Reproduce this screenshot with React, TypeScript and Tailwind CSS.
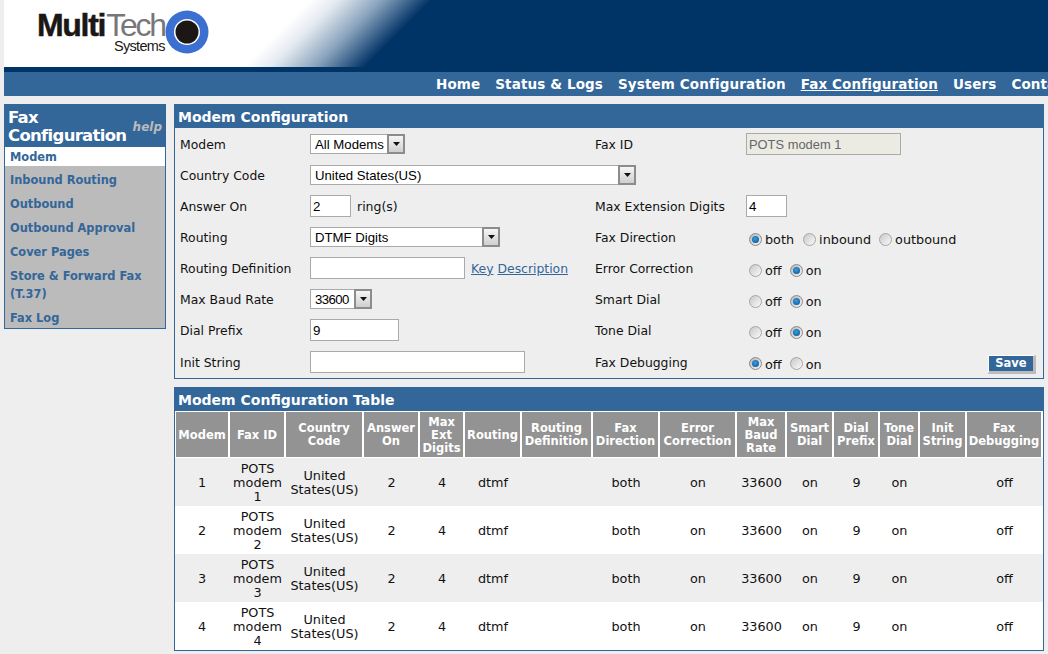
import React from "react";

const V = "font-['DejaVu_Sans',Verdana,sans-serif]";
const A = "font-['Liberation_Sans',Arial,sans-serif]";

function Arrow() {
  return (
    <span className="flex h-[20px] w-[18px] shrink-0 items-center justify-center border-2 border-[#8c8c8c] bg-[linear-gradient(#f6f6f6,#cfcfcf)]">
      <svg width="7" height="4" viewBox="0 0 7 4"><path d="M0 0h7L3.5 4z" fill="#111" /></svg>
    </span>
  );
}

function Select({ value, width, extra = "" }: { value: string; width: string; extra?: string }) {
  return (
    <div className={`-mt-[1px] flex h-[20px] items-center border-y border-l border-[#aaa] bg-white pl-[4px] ${width}`}>
      <select
        defaultValue={value}
        className={`${A} h-full min-w-0 flex-1 appearance-none bg-transparent text-[13.2px] text-black outline-none ${extra}`}
      >
        <option>{value}</option>
      </select>
      <Arrow />
    </div>
  );
}

function Input({ value = "", width, disabled }: { value?: string; width: string; disabled?: boolean }) {
  return (
    <input
      readOnly
      defaultValue={value}
      className={`${A} -mt-[1px] h-[22px] border border-[#aaa] px-[2px] outline-none ${width} ${
        disabled ? "bg-[#ebebe4] text-[12.9px] text-[#666]" : "bg-white text-[13.33px] text-black"
      }`}
    />
  );
}

function Radio({ on }: { on?: boolean }) {
  return (
    <span
      className={`-mt-[1px] flex h-[13px] w-[13px] shrink-0 items-center justify-center rounded-full border ${
        on ? "border-[#8a8a8a] bg-[linear-gradient(135deg,#b5b5b5,#f5f5f5)]" : "border-[#a5a5a5] bg-[linear-gradient(135deg,#c8c8c8,#fafafa)]"
      }`}
    >
      {on && <span className="h-[7px] w-[7px] rounded-full bg-[radial-gradient(circle_at_45%_40%,#35a0e8,#0a4a80)]" />}
    </span>
  );
}

function Radios({ items }: { items: [string, boolean, string][] }) {
  return (
    <div className="mt-[4px] flex items-center pl-[3px]">
      {items.map(([label, on, mr]) => (
        <span key={label} className={`flex items-center ${mr}`}>
          <Radio on={on} />
          <span className="ml-[3px] text-[12.8px] leading-[15px]">{label}</span>
        </span>
      ))}
    </div>
  );
}

const offOn = (on: boolean): [string, boolean, string][] => [
  ["off", !on, "mr-[8px]"],
  ["on", on, ""],
];

const Label = ({ children }: { children: React.ReactNode }) => (
  <div className="mt-[2px] text-[12.4px] leading-none text-[#111]">{children}</div>
);

const cols = [55, 56, 78, 56, 45, 57, 71, 67, 77, 50, 47, 46, 40, 47, 76];
const heads = [
  ["Modem"], ["Fax ID"], ["Country", "Code"], ["Answer", "On"], ["Max", "Ext", "Digits"], ["Routing"],
  ["Routing", "Definition"], ["Fax", "Direction"], ["Error", "Correction"], ["Max", "Baud", "Rate"],
  ["Smart", "Dial"], ["Dial", "Prefix"], ["Tone", "Dial"], ["Init", "String"], ["Fax", "Debugging"],
];
const navItems = ["Home", "Status & Logs", "System Configuration", "Fax Configuration", "Users", "Contact"];
const sideItems = ["Inbound Routing", "Outbound", "Outbound Approval", "Cover Pages"];

export default function App() {
  return (
    <div className={`${V} h-[654px] w-[1048px] overflow-hidden bg-[#eeeeee] pl-[4px] text-[#111]`}>
      <header className="relative h-[67px] bg-[linear-gradient(135deg,#ffffff_27.5%,#e6ebf1_30%,#8aa3bd_34%,#003366_38.5%)]">
        <div className={`${A} absolute left-[33px] top-[9px] flex items-start leading-none`}>
          <span className="text-[32px] font-bold tracking-[-1.3px] text-[#1a1714] [-webkit-text-stroke:0.5px_#1a1714]">Multi</span>
          <span className="ml-[1px] text-[32px] tracking-[-2.2px] text-[#77777a]">Tech</span>
        </div>
        <div className={`${A} absolute left-[110px] top-[39px] text-[14.5px] leading-none tracking-[-0.7px] text-[#1a1714]`}>Systems</div>
        <svg className="absolute left-[161px] top-[10px]" width="44" height="44" viewBox="0 0 44 44">
          <circle cx="22" cy="22" r="21.5" fill="#3b6fd1" />
          <circle cx="22" cy="22" r="13" fill="#fff" />
          <circle cx="22" cy="22" r="11.5" fill="#1a1714" />
        </svg>
      </header>
      <div className="h-[5px] bg-[#003366]" />
      <nav className="flex h-[24px] items-center gap-[15px] overflow-hidden whitespace-nowrap bg-[#336699] pl-[432px] text-[13.5px] font-bold tracking-[0.12px] text-white">
        {navItems.map((n) => (
          <a key={n} className={n === "Fax Configuration" ? "underline" : ""}>{n}</a>
        ))}
      </nav>

      <div className="mt-[8px] flex items-start gap-[8px]">
        <aside className="w-[162px] border border-t-0 border-[#336699] bg-[#bbbbbb]">
          <div className="relative h-[43px] bg-[#336699] pl-[3px] pt-[5px] text-[16.5px] font-bold leading-[17.5px] tracking-[-0.7px] text-white">
            Fax<br />Configuration
            <span className="absolute right-[3px] top-[15px] text-[12px] italic tracking-normal text-[#bbbbbb]">help</span>
          </div>
          <div className="h-[19px] bg-white pl-[5px] text-[11.4px] font-bold leading-[21px] text-[#336699]">Modem</div>
          <ul className="pt-[2px] text-[11.4px] font-bold leading-[18px] text-[#336699]">
            {sideItems.map((s) => (
              <li key={s} className="py-[3px] pl-[5px]">{s}</li>
            ))}
            <li className="py-[3px] pl-[5px]">Store &amp; Forward Fax<br />(T.37)</li>
            <li className="h-[22px] pl-[5px] pt-[3px]">Fax Log</li>
          </ul>
        </aside>

        <main className="w-[870px]">
          <section className="border border-t-0 border-[#336699]">
            <h2 className="-mx-[1px] h-[24px] bg-[#336699] pl-[4px] text-[14px] font-bold leading-[26px] text-white">Modem Configuration</h2>
            <div className="grid grid-cols-[130px_285px_151px_1fr] grid-rows-[repeat(7,31px)_32px] items-center pl-[5px] pt-[1px]">
              <Label>Modem</Label>
              <Select value="All Modems" width="w-[95px]" />
              <Label>Fax ID</Label>
              <Input value="POTS modem 1" width="w-[155px]" disabled />

              <Label>Country Code</Label>
              <Select value="United States(US)" width="w-[326px]" />
              <div />
              <div />

              <Label>Answer On</Label>
              <div className="flex items-center">
                <Input value="2" width="w-[41px]" />
                <span className="ml-[6px] mt-[1px] text-[12.5px]">ring(s)</span>
              </div>
              <Label>Max Extension Digits</Label>
              <Input value="4" width="w-[41px]" />

              <Label>Routing</Label>
              <Select value="DTMF Digits" width="w-[190px]" />
              <Label>Fax Direction</Label>
              <Radios items={[["both", true, "mr-[9px]"], ["inbound", false, "mr-[8px]"], ["outbound", false, ""]]} />

              <Label>Routing Definition</Label>
              <div className="flex items-center">
                <Input width="w-[155px]" />
                <a className="ml-[6px] mt-[1px] text-[12.4px] text-[#336699] underline">Key</a>
                <a className="ml-[4px] mt-[1px] text-[12.4px] text-[#336699] underline">Description</a>
              </div>
              <Label>Error Correction</Label>
              <Radios items={offOn(true)} />

              <Label>Max Baud Rate</Label>
              <Select value="33600" width="w-[62px]" extra="tracking-[-0.6px]" />
              <Label>Smart Dial</Label>
              <Radios items={offOn(true)} />

              <Label>Dial Prefix</Label>
              <Input value="9" width="w-[89px]" />
              <Label>Tone Dial</Label>
              <Radios items={offOn(true)} />

              <Label>Init String</Label>
              <Input width="w-[215px]" />
              <Label>Fax Debugging</Label>
              <div className="flex items-center justify-between pr-[7px]">
                <Radios items={offOn(false)} />
                <button className="h-[19px] w-[48px] translate-y-[2px] border border-r-[3px] border-b-[3px] border-[#ffffff] border-r-[#bbbbbb] border-b-[#bbbbbb] bg-[#336699] pt-[1px] text-[11.5px] font-bold leading-none text-white">Save</button>
              </div>
            </div>
          </section>

          <section className="mt-[8px] border border-t-0 border-[#336699]">
            <h2 className="-mx-[1px] h-[24px] bg-[#336699] pl-[4px] text-[14px] font-bold leading-[26px] text-white">Modem Configuration Table</h2>
            <table className="w-[868px] table-fixed border-separate border-spacing-0 text-center">
              <colgroup>
                {cols.map((w, i) => <col key={i} style={{ width: w }} />)}
              </colgroup>
              <thead>
                <tr>
                  {heads.map((h, i) => (
                    <th key={i} className={`h-[47px] border-y border-r-2 border-white bg-[#939393] p-0 pt-[1px] text-[11.5px] font-bold leading-[13px] text-white ${i === 0 ? "border-l" : ""}`}>
                      {h.map((l) => <div key={l}>{l}</div>)}
                    </th>
                  ))}
                </tr>
              </thead>
              <tbody className="text-[12.8px] leading-[14px] [&_td]:pb-0 [&_td]:pl-0 [&_td]:pr-[1px] [&_td]:pt-[1px]">
                {[1, 2, 3, 4].map((n) => (
                  <tr key={n} className={`h-[48px] ${n % 2 ? "bg-[#eeeeee]" : "bg-white"}`}>
                    <td>{n}</td>
                    <td>POTS<br />modem<br />{n}</td>
                    <td>United<br />States(US)</td>
                    <td>2</td>
                    <td>4</td>
                    <td>dtmf</td>
                    <td />
                    <td>both</td>
                    <td>on</td>
                    <td>33600</td>
                    <td>on</td>
                    <td>9</td>
                    <td>on</td>
                    <td />
                    <td>off</td>
                  </tr>
                ))}
              </tbody>
            </table>
          </section>
        </main>
      </div>
    </div>
  );
}
